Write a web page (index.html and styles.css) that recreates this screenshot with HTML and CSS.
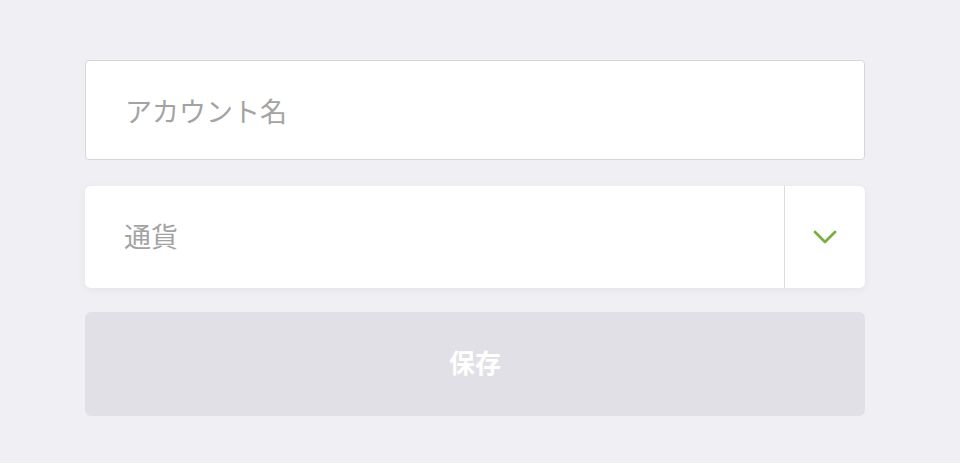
FILE: index.html
```html
<!DOCTYPE html>
<html lang="ja">
<head>
<meta charset="utf-8">
<link rel="stylesheet" href="styles.css">
</head>
<body>
<form class="form">
  <div class="field">
    <input class="text-input" type="text" placeholder="アカウント名">
  </div>
  <div class="select">
    <span class="select-label">通貨</span>
    <span class="select-arrow">
      <svg width="26" height="16" viewBox="0 0 26 16"><path d="M3 3 L13 13 L23 3" fill="none" stroke="#77b040" stroke-width="2.8" stroke-linecap="round" stroke-linejoin="round"/></svg>
    </span>
  </div>
  <button class="save" type="button">保存</button>
</form>
</body>
</html>
```
FILE: styles.css
```css
html, body {
  margin: 0;
  padding: 0;
  background: #f0f0f4;
  font-family: "Noto Sans CJK JP", "Noto Sans", sans-serif;
}
.form {
  width: 780px;
  margin: 0 0 0 85px;
  padding-top: 60px;
  display: flex;
  flex-direction: column;
}
.field {
  display: flex;
}
.text-input {
  flex: 1;
  height: 100px;
  box-sizing: border-box;
  border: 1px solid #d6d6da;
  border-radius: 4px;
  background: #fff;
  padding: 0 0 0 39px;
  font-family: inherit;
  font-size: 27px;
  color: #333;
  outline: none;
}
.text-input::placeholder {
  color: #a3a3a3;
}
.select {
  margin-top: 26px;
  height: 102px;
  background: #fff;
  border-radius: 6px;
  box-shadow: 0 2px 10px rgba(0, 0, 0, 0.05);
  display: flex;
  align-items: stretch;
}
.select-label {
  flex: 1;
  display: flex;
  align-items: center;
  padding-left: 39px;
  padding-bottom: 4px;
  font-size: 27px;
  color: #a3a3a3;
}
.select-arrow {
  width: 80px;
  border-left: 1px solid #dcdce0;
  display: flex;
  align-items: center;
  justify-content: center;
}
.save {
  margin-top: 24px;
  height: 104px;
  border: none;
  border-radius: 6px;
  background: #e1e0e6;
  color: #fff;
  font-family: inherit;
  font-size: 26px;
  font-weight: bold;
  padding: 0 0 5px;
}
```
